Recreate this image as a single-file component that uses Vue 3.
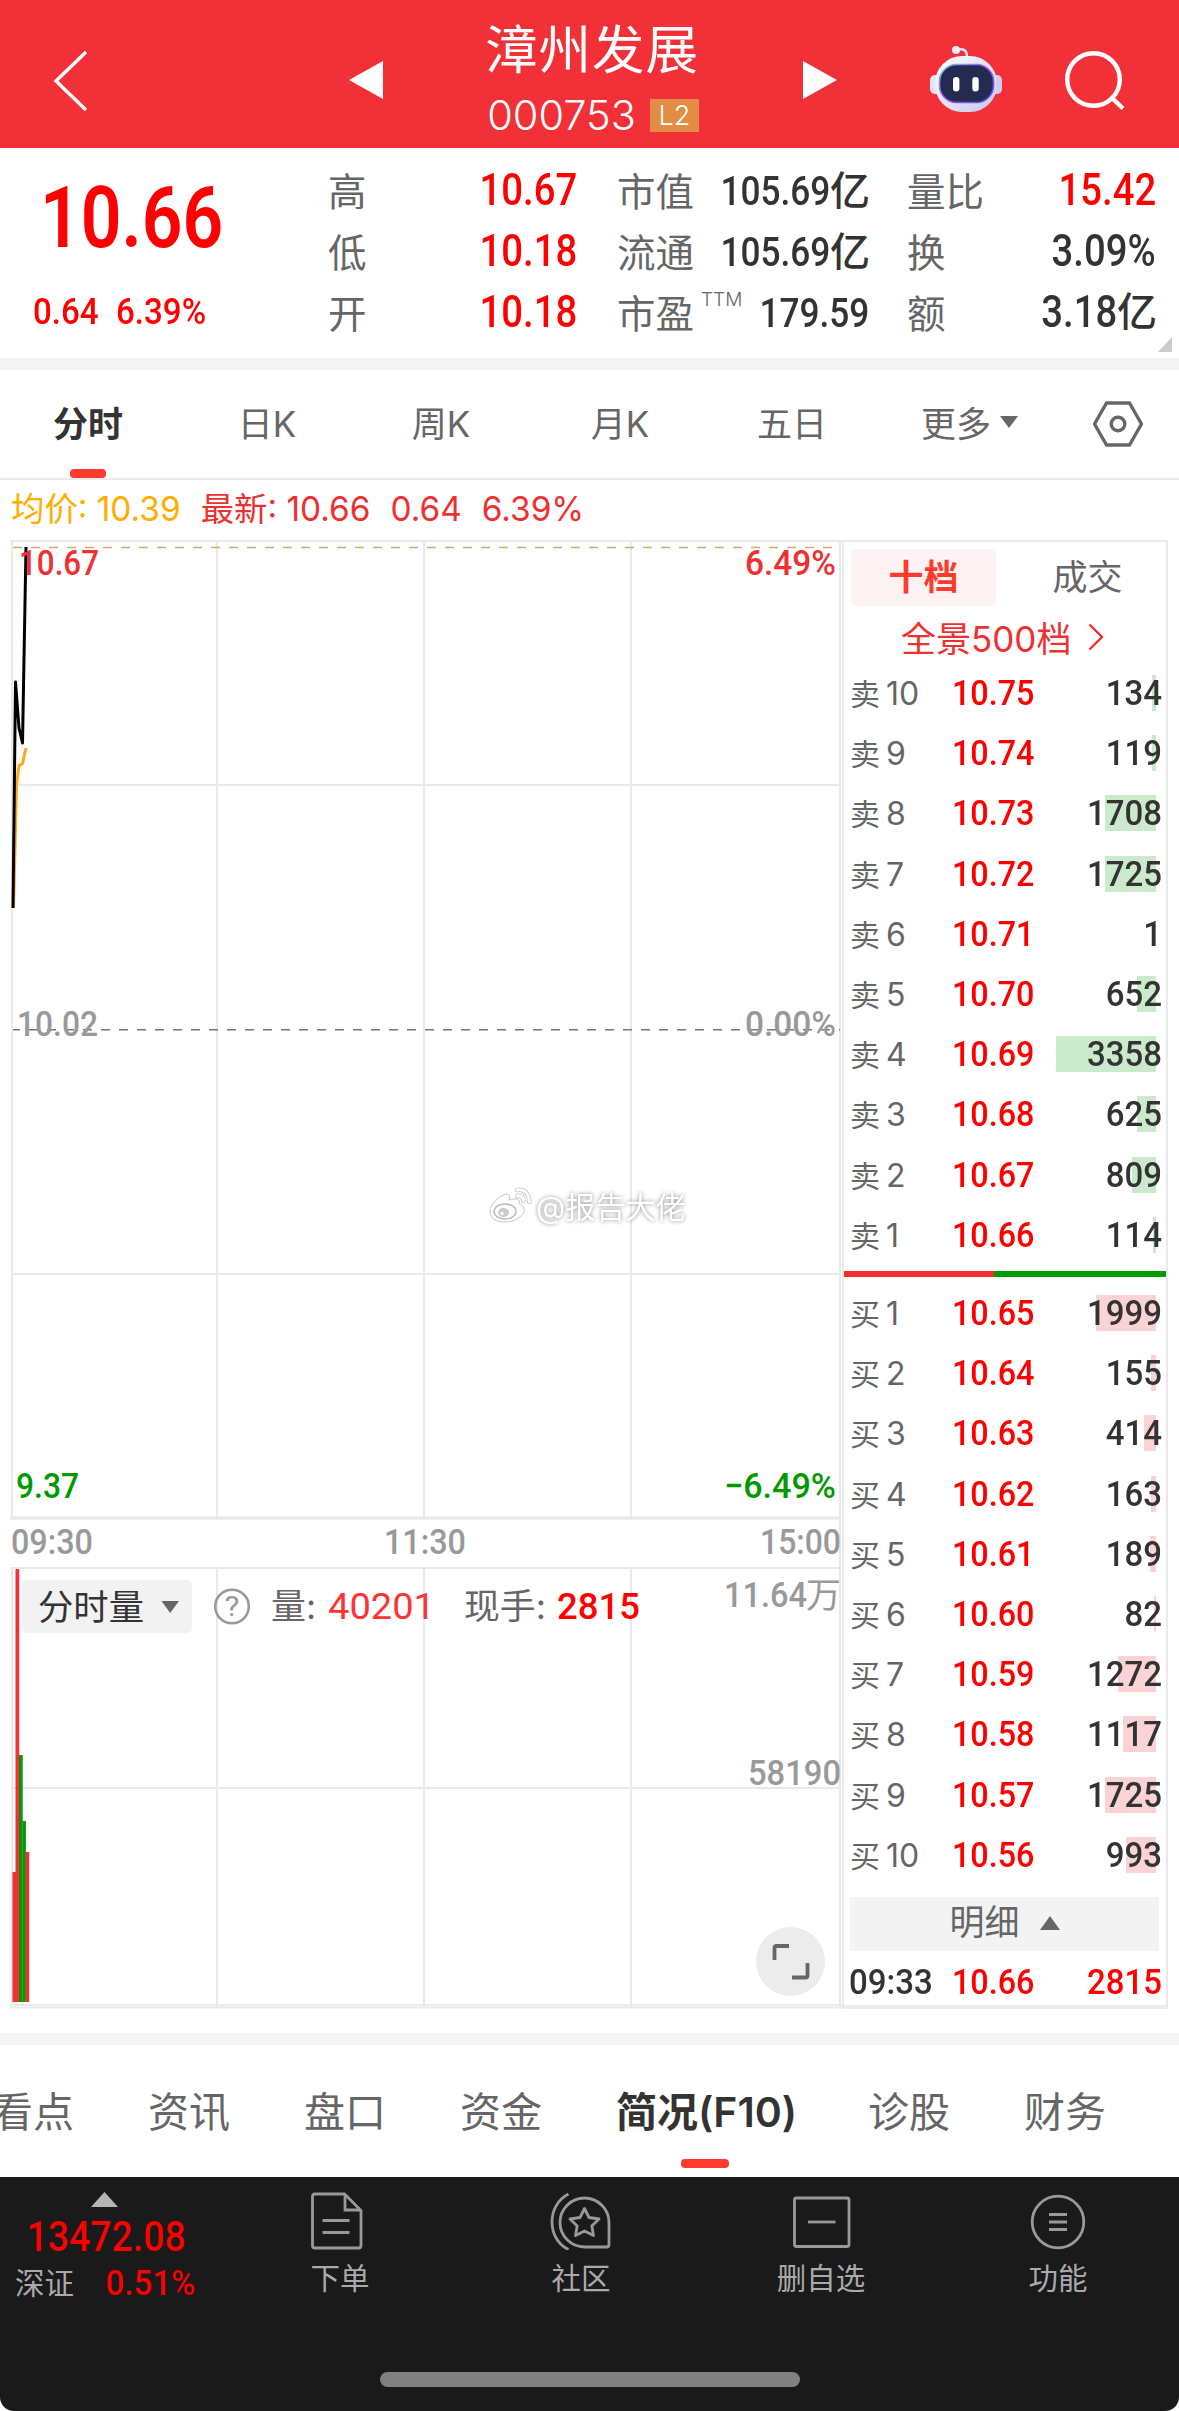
<template>
  <div class="page">
    <header class="header">
      <svg class="header-back" width="40" height="64" viewBox="0 0 40 64">
        <path d="M35 3 L5 32 L35 61" fill="none" stroke="#fff" stroke-width="3.4" />
      </svg>
      <svg class="header-prev" width="34" height="38" viewBox="0 0 34 38">
        <path d="M34 0 V38 L0 19 Z" fill="#fff" />
      </svg>
      <div class="header-title">
        <div class="stock-name">漳州发展</div>
        <div class="stock-code"><span>000753</span><i class="badge">L2</i></div>
      </div>
      <svg class="header-next" width="34" height="38" viewBox="0 0 34 38">
        <path d="M0 0 V38 L34 19 Z" fill="#fff" />
      </svg>
      <svg class="header-robot" width="72" height="70" viewBox="930 44 72 70">
        <defs>
          <linearGradient id="head" x1="0" y1="0" x2="1" y2="1">
            <stop offset="0" stop-color="#fff" />
            <stop offset="1" stop-color="#c9c6ee" />
          </linearGradient>
          <linearGradient id="rim" x1="0" y1="0" x2="1" y2="1">
            <stop offset="0" stop-color="#6fd0ee" />
            <stop offset=".5" stop-color="#a34bf0" />
            <stop offset="1" stop-color="#4a5bea" />
          </linearGradient>
        </defs>
        <path d="M957 50 Q967 47 967 57" fill="none" stroke="#e2e0f6" stroke-width="2.6" />
        <circle cx="956" cy="50" r="4" fill="#eeecfb" />
        <rect x="930" y="75" width="12" height="19" rx="5" fill="#e6e4f8" />
        <rect x="990" y="75" width="12" height="19" rx="5" fill="#cfccf0" />
        <rect x="935" y="56" width="62" height="56" rx="27" fill="url(#head)" />
        <rect x="939.5" y="64.5" width="54" height="38" rx="17" fill="#232b50" stroke="url(#rim)" stroke-width="1.6" />
        <rect x="953" y="77" width="6.4" height="14.5" rx="3.2" fill="#fff" />
        <rect x="972.3" y="77" width="6.4" height="14.5" rx="3.2" fill="#fff" />
      </svg>
      <svg class="header-search" width="64" height="64" viewBox="1064 50 64 64">
        <circle cx="1093.5" cy="79.5" r="26.3" fill="none" stroke="#fff" stroke-width="4.4" />
        <path d="M1112 98 L1123 108.5" stroke="#fff" stroke-width="4.4" />
      </svg>
    </header>

    <section class="quote">
      <div class="quote-main">
        <div class="quote-price din">10.66</div>
        <div class="quote-change"><span class="din">0.64</span><span class="din">6.39%</span></div>
      </div>
      <div v-for="(col, i) in stats" :key="i" class="quote-col">
        <div v-for="item in col" :key="item.label" class="quote-item">
          <span class="quote-label">{{ item.label }}<sup v-if="item.sup">{{ item.sup }}</sup></span>
          <span class="quote-value din" :class="{ red: item.red, small: i === 1 }">
            <span class="quote-num">{{ item.value }}</span><span v-if="item.unit" class="quote-unit">{{ item.unit }}</span>
          </span>
        </div>
      </div>
      <svg class="quote-corner" width="14" height="15" viewBox="0 0 14 15">
        <path d="M14 0 V15 H0 Z" fill="#ccc" />
      </svg>
    </section>

    <div class="band"></div>

    <nav class="period">
      <div v-for="(p, i) in periods" :key="p" class="period-item" :class="{ active: i === 0 }">{{ p }}</div>
      <div class="period-item more">
        更多
        <svg width="20" height="12" viewBox="0 0 20 12"><path d="M1 0 H19 L10 12 Z" fill="#666" /></svg>
      </div>
      <div class="period-item setting">
        <svg width="54" height="50" viewBox="0 0 54 50" fill="none" stroke="#666" stroke-width="3.4">
          <path d="M15.5 4 H38.5 L50.5 25 L38.5 46 H15.5 L3.5 25 Z" stroke-linejoin="round" />
          <circle cx="27" cy="25" r="6.8" />
        </svg>
      </div>
    </nav>

    <div class="latest">
      <span class="orange">均价: 10.39</span>
      <span>最新: 10.66</span>
      <span>0.64</span>
      <span>6.39%</span>
    </div>

    <main class="board">
      <svg class="chart" width="844" height="1469" viewBox="0 540 844 1469">
        <!-- grid -->
        <g stroke="#e9e9e9" stroke-width="2" fill="none">
          <path d="M217 541 V1517 M424 541 V1517 M631 541 V1517" />
          <path d="M217 1569 V2007 M424 1569 V2007 M631 1569 V2007" />
          <path d="M12 785 H840 M12 1274 H840 M12 1788 H840" />
          <path d="M10 541 H844 M12 541 V1518 M840 541 V2007 M843 541 V2008" />
          <path d="M10 1568 H841 M12 1568 V2007 M10 2005 H844 M10 2007.5 H844" />
          <path d="M10 1518 H841" stroke-width="3.5" />
        </g>
        <path d="M13 547.5 H840" stroke="#d3a870" stroke-width="1.6" stroke-dasharray="9 9" />
        <path d="M13 1029.7 H840" stroke="#777" stroke-width="1.6" stroke-dasharray="9 9" stroke-dashoffset="2" />

        <!-- price and average lines -->
        <polyline points="13.5,908 14.5,870 16.5,785 19,765.5 22.5,763.5 26,748" fill="none" stroke="#ffa51f" stroke-width="3" />
        <polyline points="13,908 15.5,682 19,728 22.5,743 26,547" fill="none" stroke="#000" stroke-width="3" stroke-linejoin="round" />

        <!-- volume bars -->
        <rect v-for="b in bars" :key="b.x" :x="b.x" :y="b.y" :width="b.w" :height="2002 - b.y" :fill="b.up ? '#f62f35' : '#0a950a'" />

        <rect x="22" y="1580" width="170" height="53" rx="5" fill="#f2f2f2" />
        <path d="M161.5 1601 H179 L170.2 1613 Z" fill="#666" />
        <circle cx="232" cy="1606.5" r="16.8" fill="none" stroke="#999" stroke-width="2.6" />
        <text v-for="t in texts" :key="t.text + t.y" :x="t.x" :y="t.y" :class="['t', t.cls]" :fill="t.fill" :font-size="t.size || 35.5" :textLength="t.w" lengthAdjust="spacingAndGlyphs">{{ t.text }}</text>

        <!-- expand button -->
        <circle cx="790.5" cy="1961.5" r="34.5" fill="#ececec" />
        <path d="M774.5 1960 V1948 Q774.5 1946 776.5 1946 H789 M807.5 1963 V1975.5 Q807.5 1977.5 805.5 1977.5 H792" fill="none" stroke="#666" stroke-width="3.8" />

        <!-- watermark -->
        <g class="watermark">
          <path d="M490 1211 C490 1204 500 1195 507 1194 C510 1194 510 1197 509 1200 C515 1198 521 1198 519 1204 C523 1205 525 1208 524 1212 C521 1219 512 1222 504 1222 C496 1222 490 1218 490 1211 Z" fill="#fff" stroke="#c8c8c8" stroke-width="1" />
          <ellipse cx="505" cy="1211.5" rx="11" ry="7.5" fill="#fff" stroke="#bbb" stroke-width="1.4" />
          <ellipse cx="503.5" cy="1212.5" rx="5.5" ry="4.5" fill="#ccc" />
          <circle cx="502" cy="1213.5" r="1.7" fill="#fff" />
          <path d="M517 1190 Q528 1188 529.5 1202 M517.5 1196 Q523 1195 523.5 1201" fill="none" stroke="#c4c4c4" stroke-width="4.6" stroke-linecap="round" />
          <path d="M517 1190 Q528 1188 529.5 1202 M517.5 1196 Q523 1195 523.5 1201" fill="none" stroke="#fff" stroke-width="3" stroke-linecap="round" />
          <text x="536" y="1218" fill="#fff" font-size="30" textLength="150" lengthAdjust="spacingAndGlyphs">@报告大佬</text>
        </g>
      </svg>

      <aside class="depth">
        <div class="depth-tabs">
          <div class="depth-tab active">十档</div>
          <div class="depth-tab">成交</div>
        </div>
        <div class="depth-link">
          全景500档
          <svg width="16" height="28" viewBox="0 0 16 28"><path d="M1.5 1.5 L14 14 L1.5 26.5" fill="none" stroke="#ee3030" stroke-width="2.4" /></svg>
        </div>
        <div class="depth-list">
          <div v-for="r in sells" :key="r.n" class="depth-row">
            <span class="depth-name"><b>卖</b>{{ r.n }}</span>
            <span class="depth-price din">{{ r.price }}</span>
            <span class="depth-vol din">{{ r.vol }}</span>
            <i class="depth-bar sell" :style="{ width: barWidth(r.vol) }"></i>
          </div>
        </div>
        <div class="depth-split"><i></i></div>
        <div class="depth-list">
          <div v-for="r in buys" :key="r.n" class="depth-row">
            <span class="depth-name"><b>买</b>{{ r.n }}</span>
            <span class="depth-price din">{{ r.price }}</span>
            <span class="depth-vol din">{{ r.vol }}</span>
            <i class="depth-bar buy" :style="{ width: barWidth(r.vol) }"></i>
          </div>
        </div>
        <div class="detail-head">
          <span>明细</span>
          <svg width="20" height="14" viewBox="0 0 20 14"><path d="M10 0 L20 14 H0 Z" fill="#666" /></svg>
        </div>
        <div class="depth-row detail-row">
          <span class="detail-time din">09:33</span>
          <span class="depth-price din">10.66</span>
          <span class="depth-vol din red">2815</span>
        </div>
      </aside>
    </main>

    <div class="band lower"></div>

    <nav class="tabs">
      <div v-for="t in tabs" :key="t" class="tab" :class="{ active: t === '简况(F10)' }">{{ t }}</div>
    </nav>

    <footer class="footer">
      <div class="footer-row">
        <div class="index">
          <svg class="index-arrow" width="27" height="15" viewBox="0 0 27 15"><path d="M13.5 0 L27 15 H0 Z" fill="#b5b5b5" /></svg>
          <div class="index-value din">13472.08</div>
          <div class="index-sub"><span>深证</span><span class="din red">0.51%</span></div>
        </div>
        <div class="action">
          <svg width="60" height="60" viewBox="311 2190 60 60" class="icon">
            <path d="M345.5 2194 H316 Q313.5 2194 313.5 2196.5 V2245.5 Q313.5 2248 316 2248 H359.5 Q362 2248 362 2245.5 V2210.5 Z M346 2194 V2210 H362" />
            <path d="M323.5 2220.5 H350.5 M323.5 2232.5 H350.5" />
          </svg>
          <span>下单</span>
        </div>
        <div class="action">
          <svg width="64" height="60" viewBox="548 2190 64 60" class="icon">
            <path d="M583.5 2198 A24.5 24.5 0 0 0 583.5 2247 H605.5 Q608 2247 608 2244.5 V2222.5 A24.5 24.5 0 0 0 583.5 2198 Z" />
            <path d="M567.5 2194 C545.5 2205 545.5 2239 567.5 2249.5" />
            <path d="M583.5 2208.5 L588 2217.5 L598 2219 L590.8 2226 L592.5 2235.5 L583.5 2231 L574.5 2235.5 L576.2 2226 L569 2219 L579 2217.5 Z" stroke-linejoin="round" />
          </svg>
          <span>社区</span>
        </div>
        <div class="action">
          <svg width="60" height="60" viewBox="792 2190 60 60" class="icon">
            <rect x="795.5" y="2198" width="54.5" height="48.5" rx="2" />
            <path d="M809 2222 H836.5" />
          </svg>
          <span>删自选</span>
        </div>
        <div class="action">
          <svg width="60" height="60" viewBox="1028 2190 60 60" class="icon">
            <circle cx="1058" cy="2222" r="25.8" />
            <path d="M1049 2214.5 H1067 M1049 2222 H1067 M1049 2229.5 H1067" />
          </svg>
          <span>功能</span>
        </div>
      </div>
      <div class="home-bar"></div>
    </footer>
  </div>
</template>

<script setup>
const stats = [
  [
    { label: '高', value: '10.67', red: true },
    { label: '低', value: '10.18', red: true },
    { label: '开', value: '10.18', red: true }
  ],
  [
    { label: '市值', value: '105.69', unit: '亿' },
    { label: '流通', value: '105.69', unit: '亿' },
    { label: '市盈', value: '179.59', sup: 'TTM' }
  ],
  [
    { label: '量比', value: '15.42', red: true },
    { label: '换', value: '3.09%' },
    { label: '额', value: '3.18', unit: '亿' }
  ]
]

const periods = ['分时', '日K', '周K', '月K', '五日']
const tabs = ['看点', '资讯', '盘口', '资金', '简况(F10)', '诊股', '财务']

const level = (n, price, vol) => ({ n, price, vol })
const sells = [
  level(10, '10.75', 134),
  level(9, '10.74', 119),
  level(8, '10.73', 1708),
  level(7, '10.72', 1725),
  level(6, '10.71', 1),
  level(5, '10.70', 652),
  level(4, '10.69', 3358),
  level(3, '10.68', 625),
  level(2, '10.67', 809),
  level(1, '10.66', 114)
]
const buys = [
  level(1, '10.65', 1999),
  level(2, '10.64', 155),
  level(3, '10.63', 414),
  level(4, '10.62', 163),
  level(5, '10.61', 189),
  level(6, '10.60', 82),
  level(7, '10.59', 1272),
  level(8, '10.58', 1117),
  level(9, '10.57', 1725),
  level(10, '10.56', 993)
]

// the largest order fills 100px
const barWidth = (vol) => Math.round((vol / 3358) * 100) + 'px'

const bars = [
  { x: 12.5, y: 1872, w: 3.5, up: true },
  { x: 15.5, y: 1569, w: 3.7, up: true },
  { x: 19, y: 1755, w: 3.7, up: false },
  { x: 22.5, y: 1821, w: 3.4, up: false },
  { x: 25.8, y: 1852, w: 3.4, up: true }
]

const texts = [
  { text: '10.67', x: 19, y: 575, w: 80, fill: '#ee3030', cls: 'm' },
  { text: '6.49%', x: 745, y: 575, w: 91, fill: '#ee3030', cls: 'm' },
  { text: '10.02', x: 17, y: 1036, w: 81, fill: '#999', cls: 'm' },
  { text: '0.00%', x: 745, y: 1036, w: 91, fill: '#999', cls: 'm' },
  { text: '9.37', x: 16, y: 1498, w: 63, fill: '#090', cls: 'm' },
  { text: '−6.49%', x: 724, y: 1498, w: 112, fill: '#090', cls: 'm' },
  { text: '09:30', x: 11, y: 1554, w: 82, fill: '#999', cls: 'm' },
  { text: '11:30', x: 384, y: 1554, w: 82, fill: '#999', cls: 'm' },
  { text: '15:00', x: 760, y: 1554, w: 81, fill: '#999', cls: 'm' },
  { text: '分时量', x: 38, y: 1620, w: 106, fill: '#333', cls: 'cjk', size: 35 },
  { text: '?', x: 224.5, y: 1616, w: 15, fill: '#999', size: 27 },
  { text: '量:', x: 271, y: 1619, w: 45, fill: '#666', cls: 'cjk', size: 35 },
  { text: '40201', x: 328, y: 1619, w: 107, fill: '#f33', size: 36 },
  { text: '现手:', x: 464, y: 1619, w: 82, fill: '#666', cls: 'cjk', size: 35 },
  { text: '2815', x: 557, y: 1619, w: 83, fill: '#f00', cls: 'm', size: 36 },
  { text: '11.64', x: 724, y: 1607, w: 83, fill: '#999', cls: 'm' },
  { text: '万', x: 806, y: 1608, w: 35, fill: '#999', cls: 'cjk', size: 35 },
  { text: '58190', x: 748, y: 1785, w: 93, fill: '#999', cls: 'm' }
]
</script>

<style>
body {
  background: #fff;
}
</style>

<style scoped>
.page {
  width: 1179px;
  height: 2411px;
  overflow: hidden;
  background: #fff;
  color: #333;
  font-family: Inter, "Noto Sans CJK SC", sans-serif;
}

svg {
  display: block;
  flex: none;
}

i {
  font-style: normal;
}

.din {
  font-family: Roboto, "Noto Sans CJK SC", sans-serif;
  font-weight: 500;
  white-space: nowrap;
}

.red {
  color: #f00;
}

/* header */
.header {
  height: 148px;
  display: flex;
  background: #f23038;
  color: #fff;
}

.header-back {
  margin: 49px 0 0 51px;
}

.header-prev {
  margin: 61px 0 0 258px;
}

.header-title {
  width: 420px;
  text-align: center;
}

.stock-name {
  height: 92px;
  line-height: 101px;
  font-size: 52.5px;
  letter-spacing: 1px;
  text-indent: -2px;
}

.stock-code {
  display: flex;
  justify-content: center;
  align-items: center;
  gap: 14px;
  height: 48px;
  margin-top: -1px;
  font-size: 41.5px;
  font-weight: 300;
}

.badge {
  width: 49px;
  height: 33px;
  line-height: 33px;
  background: #e28c46;
  font-size: 27px;
}

.header-next {
  margin-top: 61px;
}

.header-robot {
  margin: 44px 0 0 93px;
}

.header-search {
  margin: 50px 0 0 62px;
}

/* quote summary */
.quote {
  position: relative;
  height: 210px;
  display: grid;
  grid-template-columns: 329px 248px 250px 248px;
  column-gap: 40px;
}

.quote-main {
  width: 329px;
  color: #f00;
}

.quote-col:nth-child(2) {
  margin-left: -41px;
}

.quote-col {
  width: 249px;
  padding-top: 14px;
  margin-left: -40px;
}

.quote-col:nth-child(3) {
  width: 252px;
}

.quote-item {
  display: flex;
  justify-content: space-between;
  height: 61px;
  line-height: 61px;
}

.quote-label {
  font-size: 38.5px;
  color: #666;
  white-space: nowrap;
}

.quote-label sup {
  font-size: 19px;
  line-height: 0;
  vertical-align: 22px;
  margin-left: 7px;
  font-weight: 300;
}

.quote-value {
  display: flex;
  font-size: 44px;
  line-height: 57px;
}

.quote-num {
  transform: scaleX(.87);
  transform-origin: right;
}

.quote-value.small {
  font-size: 40.5px;
  line-height: 59px;
}

.quote-unit {
  margin-right: -1px;
  font-size: 40px;
}

.quote-price {
  padding: 19px 0 0 40px;
  height: 118px;
  line-height: 102px;
  font-size: 86px;
  font-weight: 600;
  transform: scaleX(.83);
  transform-origin: 40px 0;
}

.quote-change {
  display: flex;
  gap: 12px;
  padding-left: 33px;
  line-height: 55px;
  font-size: 36px;
}

.quote-change .din {
  transform: scaleX(.92);
  transform-origin: left;
}

.quote-corner {
  position: absolute;
  right: 7px;
  bottom: 6px;
}

.band {
  height: 12px;
  background: #f4f4f4;
}

/* chart periods */
.period {
  display: grid;
  grid-template-columns: 176px 182px 166px 192px 152px 204px 92px;
  height: 108px;
  border-bottom: 2px solid #ebebeb;
}

.period-item {
  position: relative;
  display: flex;
  align-items: center;
  justify-content: center;
  padding-bottom: 5px;
  font-size: 35px;
  color: #666;
}

.period-item.active {
  color: #333;
  font-weight: 600;
}

.period-item.active::after {
  content: '';
  position: absolute;
  bottom: 0;
  width: 36px;
  height: 9px;
  border-radius: 4px;
  background: #ff3b30;
}

.more {
  gap: 8px;
}

.setting {
  padding-bottom: 0;
}

.latest {
  display: flex;
  gap: 20px;
  height: 60px;
  padding-left: 11px;
  line-height: 58px;
  font-size: 33.4px;
  color: #ee3030;
  white-space: nowrap;
}

.orange {
  color: #ffae00;
}

/* chart and order book */
.board {
  display: flex;
  height: 1469px;
}

.t {
  font-family: Roboto, sans-serif;
}

.t.m {
  font-weight: 500;
}

.t.cjk {
  font-family: Inter, "Noto Sans CJK SC", sans-serif;
}

.watermark text {
  filter: drop-shadow(0 0 2px #888);
}

.depth {
  box-sizing: border-box;
  width: 324px;
  height: 1469px;
  border: 2px solid #e9e9e9;
  border-left: 0;
  border-bottom: 4px solid #ececec;
}

.depth-tabs {
  display: flex;
  padding: 7px 0 0 7px;
}

.depth-tab {
  width: 145px;
  height: 57px;
  line-height: 56px;
  border-radius: 5px;
  text-align: center;
  font-size: 35px;
  color: #666;
}

.depth-tab:last-child {
  margin-left: 19px;
}

.depth-tab.active {
  background: #fff2f2;
  color: #ff3b30;
  font-weight: 600;
}

.depth-link {
  display: flex;
  align-items: center;
  gap: 17px;
  height: 61px;
  padding-left: 57px;
  font-size: 35px;
  color: #ee3030;
  white-space: nowrap;
}

.depth-list {
  height: 604px;
}

.depth-row {
  position: relative;
  display: flex;
  height: 60.2px;
  padding: 0 4px 0 6px;
  line-height: 53px;
}

.depth-name {
  width: 102px;
  font-size: 32px;
  color: #666;
}

.depth-name b {
  margin-right: 6px;
  font-size: 30px;
  font-weight: 400;
}

.depth-price {
  width: 89px;
  font-size: 35.5px;
  color: #f00;
  transform: scaleX(.91);
  transform-origin: left;
}

.depth-vol {
  flex: 1;
  text-align: right;
  font-size: 35.5px;
  transform: scaleX(.93);
  transform-origin: right;
}

.depth-price,
.depth-vol,
.detail-time {
  z-index: 1;
}

.depth-bar {
  position: absolute;
  right: 10px;
  top: 8px;
  height: 36px;
}

.depth-bar.sell {
  background: #cbeacb;
}

.depth-bar.buy {
  background: #fbd3d5;
}

.depth-split {
  height: 6px;
  margin: 0 0 10px;
  background: #090;
}

.depth-split i {
  display: block;
  width: 150px;
  height: 6px;
  background: #ee3030;
}

.detail-head {
  display: flex;
  align-items: center;
  justify-content: center;
  gap: 20px;
  height: 54px;
  margin: 6px 7px 5px 6px;
  background: #f3f3f3;
  font-size: 35px;
  line-height: 50px;
  color: #666;
}

.detail-head span {
  padding-bottom: 4px;
}

.detail-head svg {
  margin-bottom: 2px;
}

.detail-time {
  width: 103px;
  margin-left: -1px;
  font-size: 35.5px;
  transform: scaleX(.93);
  transform-origin: left;
}

.band.lower {
  margin-top: 24px;
}

/* section tabs */
.tabs {
  display: flex;
  gap: 74px;
  height: 132px;
  margin-left: -8px;
  line-height: 134px;
}

.tab {
  position: relative;
  flex: none;
  height: 132px;
  font-size: 41px;
  color: #666;
  white-space: nowrap;
}

.tab.active {
  color: #333;
  font-weight: 600;
  width: 178px;
}

.tab.active::after {
  content: '';
  position: absolute;
  left: 65px;
  bottom: 9px;
  width: 48px;
  height: 9px;
  border-radius: 4px;
  background: #ff3b30;
}

/* footer */
.footer {
  height: 234px;
  background: #1a1a1a;
  border-radius: 0 0 14px 14px;
  color: #aaa;
}

.footer-row {
  display: grid;
  grid-template-columns: 222px 236px 246px 234px 240px;
  height: 195px;
}

.index-arrow {
  margin: 15px 0 0 91px;
}

.index-value {
  padding-left: 27px;
  height: 58px;
  line-height: 60px;
  font-size: 42.5px;
  color: #f00;
  transform: scaleX(.88);
  transform-origin: 27px 0;
}

.index-sub {
  display: flex;
  padding-left: 15px;
  line-height: 36px;
  font-size: 29.5px;
}

.index-sub .din {
  margin-left: 32px;
  font-size: 35.5px;
  transform: scaleX(.93);
  transform-origin: left;
}

.action {
  display: flex;
  flex-direction: column;
  align-items: center;
  padding-top: 13px;
  font-size: 29.5px;
}

.action span {
  line-height: 56px;
}

.icon {
  fill: none;
  stroke: #999;
  stroke-width: 2.8;
}

.home-bar {
  width: 420px;
  height: 15px;
  margin: 0 auto;
  border-radius: 8px;
  background: #808080;
}
</style>
